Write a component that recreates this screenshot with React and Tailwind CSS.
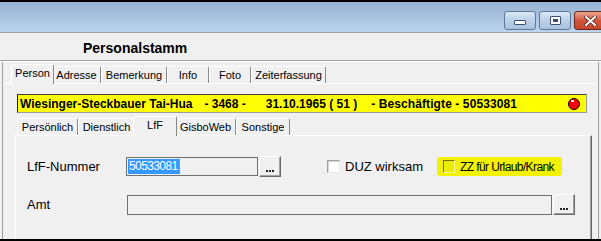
import React from "react";

function Tab({ w, h, selected, children }) {
  return (
    <div
      className={
        "flex items-center justify-center border-t border-l border-white border-r border-r-[#8a8a8a] rounded-t-[2px] text-[11px] text-black leading-none whitespace-nowrap " +
        (selected ? "relative z-10 -mb-px bg-[#f0f0f0] -mx-[2px] " : "bg-[#f0f0f0] ") +
        w
      }
      style={{ height: h }}
    >
      <span className={selected ? "pb-[2px]" : ""}>{children}</span>
    </div>
  );
}

function DotsButton({ h }) {
  return (
    <div
      className={
        "w-[22px] ml-px flex items-end justify-center pb-[4px] bg-[#f0f0f0] border-t border-l border-white border-r border-b border-r-[#696969] border-b-[#696969] shadow-[inset_-1px_-1px_0_#a0a0a0] " +
        h
      }
    >
      <div className="flex gap-[1px]">
        <div className="w-[2px] h-[2px] bg-[#202020]" />
        <div className="w-[2px] h-[2px] bg-[#202020]" />
        <div className="w-[2px] h-[2px] bg-[#202020]" />
      </div>
    </div>
  );
}

export default function App() {
  return (
    <div className="w-[601px] h-[241px] overflow-hidden bg-[#f0f0f0] flex flex-col font-['Liberation_Sans',Arial,sans-serif] text-black">
      {/* top black edge */}
      <div className="h-[2px] bg-black shrink-0" />
      {/* title bar */}
      <div className="h-[30px] shrink-0 bg-gradient-to-b from-[#97b3d4] to-[#bcd4ed] flex items-start pl-[504px] pt-[9px] gap-[3px]">
        <div className="w-[32px] h-[19px] shrink-0 rounded-[3px] border border-[#5f7898] bg-gradient-to-b from-[#dae7f5] via-[#bcd0e8] to-[#a9c2df] flex items-end justify-center pb-[4px]">
          <div className="w-[12px] h-[5px] bg-white border border-[#3b506c] rounded-[1px]" />
        </div>
        <div className="w-[32px] h-[19px] shrink-0 rounded-[3px] border border-[#5f7898] bg-gradient-to-b from-[#dae7f5] via-[#bcd0e8] to-[#a9c2df] flex items-center justify-center">
          <div className="w-[11px] h-[9px] bg-white border border-[#3b506c] rounded-[1px] flex items-center justify-center">
            <div className="w-[5px] h-[3px] bg-[#3b506c]" />
          </div>
        </div>
        <div className="w-[44px] h-[19px] shrink-0 rounded-[3px] border border-[#6b2418] bg-gradient-to-b from-[#e9a593] via-[#d2563f] to-[#c4452c] flex items-center pl-[9px]">
          <svg width="13" height="10" viewBox="0 0 13 10">
            <path d="M2 1 L11 9 M11 1 L2 9" stroke="#5a2a20" strokeWidth="3.6" strokeLinecap="square" />
            <path d="M2 1 L11 9 M11 1 L2 9" stroke="#ffffff" strokeWidth="2" strokeLinecap="square" />
          </svg>
        </div>
      </div>
      <div className="h-px bg-[#9c9c9c] shrink-0" />
      {/* header */}
      <div className="h-[27px] shrink-0 flex items-center pl-[83px] pt-[2px]">
        <span className="text-[14px] font-bold leading-none">Personalstamm</span>
      </div>
      <div className="h-px bg-[#a0a0a0] shrink-0" />
      <div className="h-px bg-white shrink-0" />

      {/* body */}
      <div className="flex-1 flex flex-col ml-[2px] mr-[2px] border-l border-l-[#a0a0a0] border-r border-r-[#a0a0a0] min-h-0">
        {/* tabs row 1 */}
        <div className="flex items-end pl-[10px] mt-px h-[20px] shrink-0">
          <Tab w="w-[43px]" h={20} selected>Person</Tab>
          <Tab w="w-[49px]" h={17}>Adresse</Tab>
          <Tab w="w-[66px]" h={17}>Bemerkung</Tab>
          <Tab w="w-[42px]" h={17}>Info</Tab>
          <Tab w="w-[42px]" h={17}>Foto</Tab>
          <Tab w="w-[75px]" h={17}>Zeiterfassung</Tab>
        </div>
        <div className="flex-1 flex flex-col border-t border-white min-h-0">
          {/* yellow info bar */}
          <div className="mt-[10px] ml-[14px] w-[570px] h-[19px] shrink-0 bg-[#ffff00] border-t border-l border-t-[#404040] border-l-[#202020] border-r border-b border-r-[#9a9a9a] border-b-[#9a9a9a] flex items-center pl-[2px] text-[12px] font-bold leading-none whitespace-pre">
            <span>Wiesinger-Steckbauer Tai-Hua</span>
            <span className="ml-[12px]">- 3468 -</span>
            <span className="ml-[20px]">31.10.1965 ( 51 )</span>
            <span className="ml-[14px] tracking-[0.1px]">- Beschäftigte - 50533081</span>
            <div className="ml-auto mr-[6px] w-[12px] h-[12px] rounded-full bg-[#ff0000] border border-black relative">
              <div className="absolute left-[2px] top-[1px] w-[3px] h-[2px] rounded-full bg-white" />
            </div>
          </div>
          {/* tabs row 2 */}
          <div className="flex items-end pl-[14px] mt-[2px] h-[20px] shrink-0">
            <Tab w="w-[61px]" h={17}>Persönlich</Tab>
            <Tab w="w-[57px]" h={17}>Dienstlich</Tab>
            <Tab w="w-[44px]" h={20} selected>LfF</Tab>
            <Tab w="w-[61px]" h={17}>GisboWeb</Tab>
            <Tab w="w-[54px]" h={17}>Sonstige</Tab>
          </div>
          {/* panel */}
          <div className="flex-1 ml-[12px] w-[577px] border-t border-l border-white border-r border-r-[#696969] shadow-[inset_-1px_0_0_#a0a0a0] flex flex-col min-h-0">
            {/* row 1 */}
            <div className="mt-[20px] h-[21px] flex items-center pl-[11px] shrink-0">
              <div className="w-[99px] shrink-0 text-[13px] leading-none whitespace-nowrap">LfF-Nummer</div>
              <div className="w-[132px] shrink-0 h-[19px] border border-[#707070] bg-[#f0f0f0] flex items-center pl-[1px]">
                <span className="bg-[#3399ff] text-white text-[12px] tracking-[-0.6px] leading-[15px] h-[15px] pl-px pr-px">50533081</span>
                <span className="w-px h-[15px] bg-[#ff7a00]" />
              </div>
              <DotsButton h="h-[21px]" />
              <div className="ml-[46px] flex items-center w-[110px] shrink-0">
                <div className="w-[13px] h-[13px] shrink-0 bg-white border border-t-[#a0a0a0] border-l-[#a0a0a0] border-r-[#e8e8e8] border-b-[#e8e8e8] shadow-[inset_1px_1px_0_#d8d8d8]" />
                <span className="ml-[5px] text-[13px] leading-none whitespace-nowrap">DUZ wirksam</span>
              </div>
              <div className="w-[125px] shrink-0 h-[19px] bg-[#f2f200] rounded-[3px] flex items-center pl-[6px]">
                <div className="w-[12px] h-[13px] shrink-0 border-t border-l border-t-[#707000] border-l-[#707000] border-r border-b border-r-[#ffffa0] border-b-[#ffffa0] bg-[#ecec00]" />
                <span className="ml-[5px] text-[12px] tracking-[-0.6px] leading-none whitespace-nowrap">ZZ für Urlaub/Krank</span>
              </div>
            </div>
            {/* row 2 */}
            <div className="mt-[17px] h-[21px] flex items-center pl-[11px] shrink-0">
              <div className="w-[100px] shrink-0 text-[13px] leading-none">Amt</div>
              <div className="w-[425px] shrink-0 h-[20px] border border-[#707070] bg-[#f0f0f0]" />
              <DotsButton h="h-[21px]" />
            </div>
          </div>
        </div>
      </div>
      <div className="h-[2px] bg-black shrink-0" />
    </div>
  );
}
